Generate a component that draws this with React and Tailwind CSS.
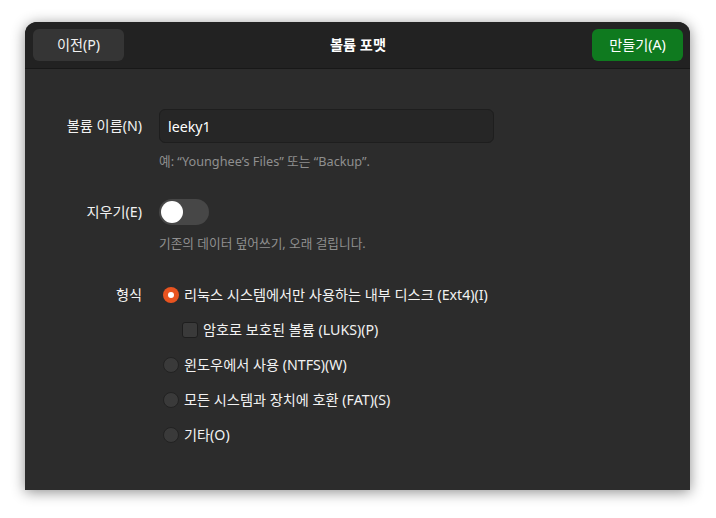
import React, { useState } from 'react';

const FONT = "font-['Noto_Sans','Noto_Sans_CJK_KR',sans-serif]";

const FORMATS = [
  { id: 'ext4', label: '리눅스 시스템에서만 사용하는 내부 디스크 (Ext4)(I)' },
  { id: 'ntfs', label: '윈도우에서 사용 (NTFS)(W)' },
  { id: 'fat', label: '모든 시스템과 장치에 호환 (FAT)(S)' },
  { id: 'other', label: '기타(O)' },
];

const Radio = ({ checked }) =>
  checked ? (
    <span className="w-4 h-4 rounded-full bg-[#e95420] flex items-center justify-center shrink-0">
      <span className="w-[6px] h-[6px] rounded-full bg-white" />
    </span>
  ) : (
    <span className="w-4 h-4 rounded-full bg-[#3a3a3a] border border-[#222222] shrink-0" />
  );

const FormatRow = ({ item, checked, onPick }) => (
  <button
    onClick={() => onPick(item.id)}
    className="h-[35px] flex items-center gap-[5px] text-[14.2px] text-[#f2f2f2] text-left"
  >
    <Radio checked={checked} />
    <span>{item.label}</span>
  </button>
);

const App = () => {
  const [format, setFormat] = useState('ext4');
  const [name, setName] = useState('leeky1');
  const [erase, setErase] = useState(false);
  const [luks, setLuks] = useState(false);

  return (
    <div className={`w-[716px] h-[518px] bg-white pl-[25px] pt-[22px] ${FONT}`}>
      <div className="w-[665px] h-[468px] rounded-t-[12px] bg-[#2c2c2c] shadow-[0_2px_14px_rgba(0,0,0,0.45)] overflow-hidden flex flex-col">
        {/* Header bar */}
        <div className="h-[47px] bg-[#222222] border-b border-[#181818] flex items-center justify-between pl-2 pr-[7px] shrink-0">
          <button className="w-[91px] h-[32px] rounded-[6px] bg-[#353535] text-[14.2px] text-[#f2f2f2]">
            이전(P)
          </button>
          <span className="text-[14.2px] font-bold text-white">볼륨 포맷</span>
          <button className="w-[91px] h-[32px] rounded-[6px] bg-[#0f7a1f] text-[14.2px] text-white">
            만들기(A)
          </button>
        </div>

        {/* Form */}
        <div className="flex flex-col pt-[40px]">
          <div className="flex items-center">
            <span className="w-[117px] text-right text-[14.2px] text-[#f2f2f2]">볼륨 이름(N)</span>
            <input
              value={name}
              onChange={(e) => setName(e.target.value)}
              className="ml-[17px] w-[335px] h-[34px] rounded-[6px] bg-[#262626] border border-[#1e1e1e] px-[8px] text-[14.2px] text-white outline-none"
            />
          </div>
          <p className="ml-[134px] mt-[9px] h-[18px] leading-[18px] text-[12.7px] text-[#8f8f8f]">
            예: “Younghee’s Files” 또는 “Backup”.
          </p>

          <div className="flex items-center mt-[29px]">
            <span className="w-[117px] text-right text-[14.2px] text-[#f2f2f2]">지우기(E)</span>
            <button
              onClick={() => setErase(!erase)}
              className={`ml-[17px] w-[50px] h-[26px] rounded-full p-[2px] flex items-center ${
                erase ? 'bg-[#e95420] justify-end' : 'bg-[#474747] justify-start'
              }`}
            >
              <span className="w-[22px] h-[22px] rounded-full bg-white" />
            </button>
          </div>
          <p className="ml-[134px] mt-[9px] h-[18px] leading-[18px] text-[12.7px] text-[#8f8f8f]">
            기존의 데이터 덮어쓰기, 오래 걸립니다.
          </p>

          <div className="flex mt-[25px]">
            <span className="w-[117px] h-[35px] flex items-center justify-end text-[14.2px] text-[#f2f2f2]">
              형식
            </span>
            <div className="ml-[21px] flex flex-col">
              <FormatRow item={FORMATS[0]} checked={format === 'ext4'} onPick={setFormat} />
              <button
                onClick={() => setLuks(!luks)}
                className="h-[35px] ml-[19px] flex items-center gap-[5px] text-[14.2px] text-[#f2f2f2]"
              >
                <span className="w-4 h-4 rounded-[3px] bg-[#3a3a3a] border border-[#1e1e1e] shrink-0" />
                <span>암호로 보호된 볼륨 (LUKS)(P)</span>
              </button>
              {FORMATS.slice(1).map((f) => (
                <FormatRow key={f.id} item={f} checked={format === f.id} onPick={setFormat} />
              ))}
            </div>
          </div>
        </div>
      </div>
    </div>
  );
};

export default App;
